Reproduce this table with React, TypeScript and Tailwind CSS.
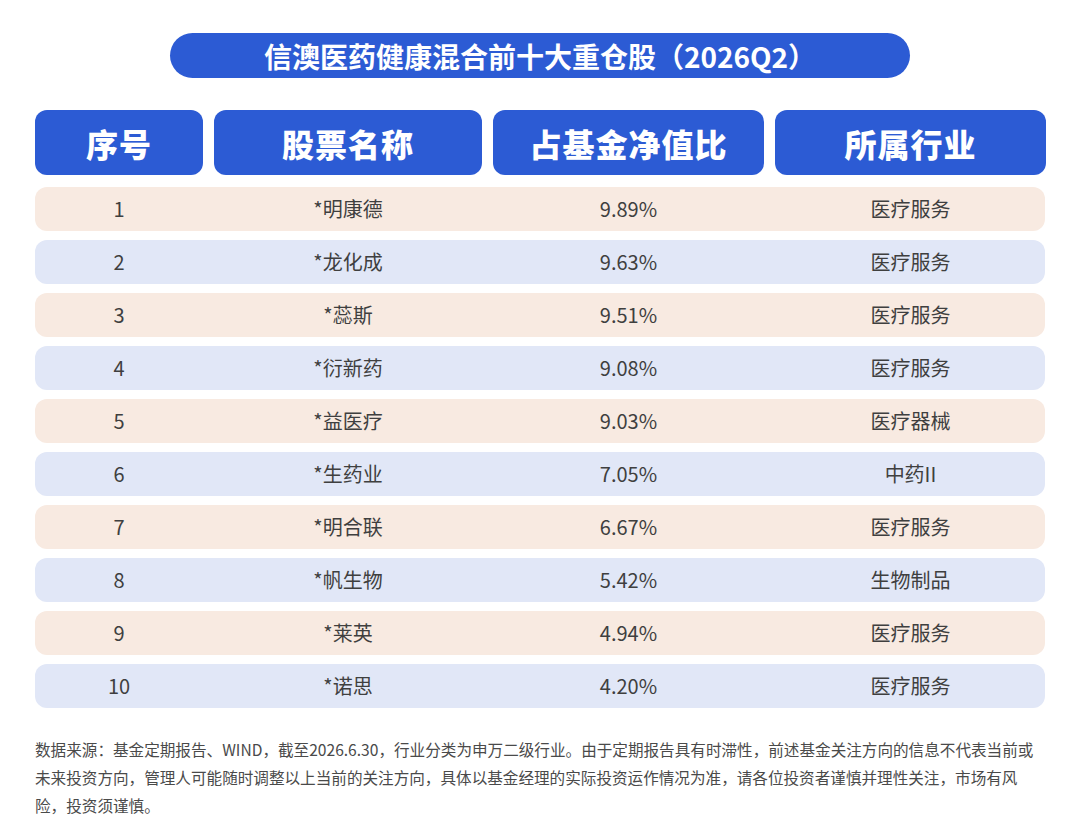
import React from 'react';

const rows = [
  ['1', '*明康德', '9.89%', '医疗服务'],
  ['2', '*龙化成', '9.63%', '医疗服务'],
  ['3', '*蕊斯', '9.51%', '医疗服务'],
  ['4', '*衍新药', '9.08%', '医疗服务'],
  ['5', '*益医疗', '9.03%', '医疗器械'],
  ['6', '*生药业', '7.05%', '中药II'],
  ['7', '*明合联', '6.67%', '医疗服务'],
  ['8', '*帆生物', '5.42%', '生物制品'],
  ['9', '*莱英', '4.94%', '医疗服务'],
  ['10', '*诺思', '4.20%', '医疗服务'],
];

const heads = ['序号', '股票名称', '占基金净值比', '所属行业'];

export default function App() {
  return (
    <div
      className="w-[1080px] h-[840px] bg-white overflow-hidden"
      style={{ fontFamily: '"Noto Sans CJK SC", "Noto Sans", sans-serif' }}
    >
      <div className="flex justify-center pt-[33px]">
        <div className="w-[740px] h-[45px] rounded-full bg-[#2c5bd4] flex items-center justify-center text-white text-[28px] font-bold leading-none">
          信澳医药健康混合前十大重仓股（2026Q2）
        </div>
      </div>

      <div className="px-[35px] pt-[32px]">
        <div className="grid grid-cols-[168px_268px_271px_271px] gap-x-[11px]">
          {heads.map((h) => (
            <div
              key={h}
              className="h-[65px] rounded-[12px] bg-[#2c5bd4] flex items-center justify-center text-white text-[32px] font-black tracking-[1px]"
            >
              {h}
            </div>
          ))}
        </div>

        <div className="flex flex-col gap-[9px] mt-[12px]">
          {rows.map((r, i) => (
            <div
              key={r[0]}
              className={`h-[44px] rounded-[12px] grid grid-cols-[168px_268px_271px_271px] gap-x-[11px] items-center text-[20px] text-[#3f3f3f] ${
                i % 2 === 0 ? 'bg-[#f8eae1]' : 'bg-[#e1e7f7]'
              }`}
            >
              {r.map((c, j) => (
                <div key={j} className="text-center">
                  {c}
                </div>
              ))}
            </div>
          ))}
        </div>

        <p className="mt-[27px] text-[15.6px] leading-[28px] text-[#4a4a4a]">
          数据来源：基金定期报告、WIND，截至2026.6.30，行业分类为申万二级行业。由于定期报告具有时滞性，前述基金关注方向的信息不代表当前或未来投资方向，管理人可能随时调整以上当前的关注方向，具体以基金经理的实际投资运作情况为准，请各位投资者谨慎并理性关注，市场有风险，投资须谨慎。
        </p>
      </div>
    </div>
  );
}
